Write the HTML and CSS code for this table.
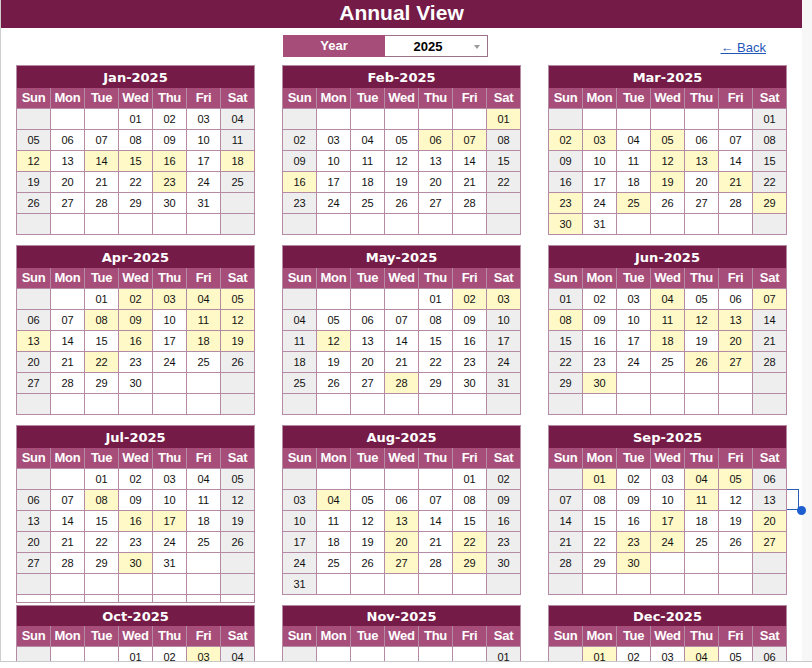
FILE: index.html
```html
<!DOCTYPE html>
<html lang="en">
<head>
<meta charset="utf-8">
<title>Annual View</title>
<link rel="stylesheet" href="styles.css">
</head>
<body>
<div class="window">
  <div class="sheet">
    <div class="titlebar">Annual View</div>
    <div class="board">
      <div class="spacer"></div>
      <div class="yearbox">
        <div class="yearlabel">Year</div>
        <div class="yearselect"><span class="yearval">2025</span><span class="caret"></span></div>
      </div>
      <div class="backcell"><a class="back" href="#">&larr; Back</a></div>

      <div class="month">
        <div class="mtitle">Jan-2025</div>
        <div class="grid">
          <div class="dn">Sun</div><div class="dn">Mon</div><div class="dn">Tue</div><div class="dn">Wed</div><div class="dn">Thu</div><div class="dn">Fri</div><div class="dn">Sat</div>
          <div class="c w"></div><div class="c"></div><div class="c"></div><div class="c">01</div><div class="c">02</div><div class="c">03</div><div class="c w">04</div>
          <div class="c w">05</div><div class="c">06</div><div class="c">07</div><div class="c">08</div><div class="c">09</div><div class="c">10</div><div class="c w">11</div>
          <div class="c h">12</div><div class="c">13</div><div class="c h">14</div><div class="c h">15</div><div class="c h">16</div><div class="c">17</div><div class="c h">18</div>
          <div class="c w">19</div><div class="c">20</div><div class="c">21</div><div class="c">22</div><div class="c h">23</div><div class="c">24</div><div class="c w">25</div>
          <div class="c w">26</div><div class="c">27</div><div class="c">28</div><div class="c">29</div><div class="c">30</div><div class="c">31</div><div class="c w"></div>
          <div class="c w"></div><div class="c"></div><div class="c"></div><div class="c"></div><div class="c"></div><div class="c"></div><div class="c w"></div>
        </div>
      </div>

      <div class="month">
        <div class="mtitle">Feb-2025</div>
        <div class="grid">
          <div class="dn">Sun</div><div class="dn">Mon</div><div class="dn">Tue</div><div class="dn">Wed</div><div class="dn">Thu</div><div class="dn">Fri</div><div class="dn">Sat</div>
          <div class="c w"></div><div class="c"></div><div class="c"></div><div class="c"></div><div class="c"></div><div class="c"></div><div class="c h">01</div>
          <div class="c w">02</div><div class="c">03</div><div class="c">04</div><div class="c">05</div><div class="c h">06</div><div class="c h">07</div><div class="c w">08</div>
          <div class="c w">09</div><div class="c">10</div><div class="c">11</div><div class="c">12</div><div class="c">13</div><div class="c">14</div><div class="c w">15</div>
          <div class="c h">16</div><div class="c">17</div><div class="c">18</div><div class="c">19</div><div class="c">20</div><div class="c">21</div><div class="c w">22</div>
          <div class="c w">23</div><div class="c">24</div><div class="c">25</div><div class="c">26</div><div class="c">27</div><div class="c">28</div><div class="c w"></div>
          <div class="c w"></div><div class="c"></div><div class="c"></div><div class="c"></div><div class="c"></div><div class="c"></div><div class="c w"></div>
        </div>
      </div>

      <div class="month">
        <div class="mtitle">Mar-2025</div>
        <div class="grid">
          <div class="dn">Sun</div><div class="dn">Mon</div><div class="dn">Tue</div><div class="dn">Wed</div><div class="dn">Thu</div><div class="dn">Fri</div><div class="dn">Sat</div>
          <div class="c w"></div><div class="c"></div><div class="c"></div><div class="c"></div><div class="c"></div><div class="c"></div><div class="c w">01</div>
          <div class="c h">02</div><div class="c h">03</div><div class="c">04</div><div class="c h">05</div><div class="c">06</div><div class="c">07</div><div class="c w">08</div>
          <div class="c w">09</div><div class="c">10</div><div class="c">11</div><div class="c h">12</div><div class="c h">13</div><div class="c">14</div><div class="c w">15</div>
          <div class="c w">16</div><div class="c">17</div><div class="c">18</div><div class="c h">19</div><div class="c">20</div><div class="c h">21</div><div class="c w">22</div>
          <div class="c h">23</div><div class="c">24</div><div class="c h">25</div><div class="c">26</div><div class="c">27</div><div class="c">28</div><div class="c h">29</div>
          <div class="c h">30</div><div class="c">31</div><div class="c"></div><div class="c"></div><div class="c"></div><div class="c"></div><div class="c w"></div>
        </div>
      </div>

      <div class="month">
        <div class="mtitle">Apr-2025</div>
        <div class="grid">
          <div class="dn">Sun</div><div class="dn">Mon</div><div class="dn">Tue</div><div class="dn">Wed</div><div class="dn">Thu</div><div class="dn">Fri</div><div class="dn">Sat</div>
          <div class="c w"></div><div class="c"></div><div class="c">01</div><div class="c h">02</div><div class="c h">03</div><div class="c h">04</div><div class="c h">05</div>
          <div class="c w">06</div><div class="c">07</div><div class="c h">08</div><div class="c h">09</div><div class="c">10</div><div class="c h">11</div><div class="c h">12</div>
          <div class="c h">13</div><div class="c">14</div><div class="c">15</div><div class="c h">16</div><div class="c">17</div><div class="c h">18</div><div class="c h">19</div>
          <div class="c w">20</div><div class="c">21</div><div class="c h">22</div><div class="c">23</div><div class="c">24</div><div class="c">25</div><div class="c w">26</div>
          <div class="c w">27</div><div class="c">28</div><div class="c">29</div><div class="c">30</div><div class="c"></div><div class="c"></div><div class="c w"></div>
          <div class="c w"></div><div class="c"></div><div class="c"></div><div class="c"></div><div class="c"></div><div class="c"></div><div class="c w"></div>
        </div>
      </div>

      <div class="month">
        <div class="mtitle">May-2025</div>
        <div class="grid">
          <div class="dn">Sun</div><div class="dn">Mon</div><div class="dn">Tue</div><div class="dn">Wed</div><div class="dn">Thu</div><div class="dn">Fri</div><div class="dn">Sat</div>
          <div class="c w"></div><div class="c"></div><div class="c"></div><div class="c"></div><div class="c">01</div><div class="c h">02</div><div class="c h">03</div>
          <div class="c w">04</div><div class="c">05</div><div class="c">06</div><div class="c">07</div><div class="c">08</div><div class="c">09</div><div class="c w">10</div>
          <div class="c w">11</div><div class="c h">12</div><div class="c">13</div><div class="c">14</div><div class="c">15</div><div class="c">16</div><div class="c w">17</div>
          <div class="c w">18</div><div class="c">19</div><div class="c">20</div><div class="c">21</div><div class="c">22</div><div class="c">23</div><div class="c w">24</div>
          <div class="c w">25</div><div class="c">26</div><div class="c">27</div><div class="c h">28</div><div class="c">29</div><div class="c">30</div><div class="c w">31</div>
          <div class="c w"></div><div class="c"></div><div class="c"></div><div class="c"></div><div class="c"></div><div class="c"></div><div class="c w"></div>
        </div>
      </div>

      <div class="month">
        <div class="mtitle">Jun-2025</div>
        <div class="grid">
          <div class="dn">Sun</div><div class="dn">Mon</div><div class="dn">Tue</div><div class="dn">Wed</div><div class="dn">Thu</div><div class="dn">Fri</div><div class="dn">Sat</div>
          <div class="c w">01</div><div class="c">02</div><div class="c">03</div><div class="c h">04</div><div class="c">05</div><div class="c">06</div><div class="c h">07</div>
          <div class="c h">08</div><div class="c">09</div><div class="c">10</div><div class="c h">11</div><div class="c h">12</div><div class="c h">13</div><div class="c w">14</div>
          <div class="c w">15</div><div class="c">16</div><div class="c">17</div><div class="c h">18</div><div class="c">19</div><div class="c h">20</div><div class="c w">21</div>
          <div class="c w">22</div><div class="c">23</div><div class="c">24</div><div class="c">25</div><div class="c h">26</div><div class="c h">27</div><div class="c w">28</div>
          <div class="c w">29</div><div class="c h">30</div><div class="c"></div><div class="c"></div><div class="c"></div><div class="c"></div><div class="c w"></div>
          <div class="c w"></div><div class="c"></div><div class="c"></div><div class="c"></div><div class="c"></div><div class="c"></div><div class="c w"></div>
        </div>
      </div>

      <div class="month tail">
        <div class="mtitle">Jul-2025</div>
        <div class="grid">
          <div class="dn">Sun</div><div class="dn">Mon</div><div class="dn">Tue</div><div class="dn">Wed</div><div class="dn">Thu</div><div class="dn">Fri</div><div class="dn">Sat</div>
          <div class="c w"></div><div class="c"></div><div class="c">01</div><div class="c">02</div><div class="c">03</div><div class="c">04</div><div class="c w">05</div>
          <div class="c w">06</div><div class="c">07</div><div class="c h">08</div><div class="c">09</div><div class="c">10</div><div class="c">11</div><div class="c w">12</div>
          <div class="c w">13</div><div class="c">14</div><div class="c">15</div><div class="c h">16</div><div class="c h">17</div><div class="c">18</div><div class="c w">19</div>
          <div class="c w">20</div><div class="c">21</div><div class="c">22</div><div class="c">23</div><div class="c">24</div><div class="c">25</div><div class="c w">26</div>
          <div class="c w">27</div><div class="c">28</div><div class="c">29</div><div class="c h">30</div><div class="c">31</div><div class="c"></div><div class="c w"></div>
          <div class="c w"></div><div class="c"></div><div class="c"></div><div class="c"></div><div class="c"></div><div class="c"></div><div class="c w"></div>
          <div class="c"></div><div class="c"></div><div class="c"></div><div class="c"></div><div class="c"></div><div class="c"></div><div class="c"></div>
        </div>
      </div>

      <div class="month">
        <div class="mtitle">Aug-2025</div>
        <div class="grid">
          <div class="dn">Sun</div><div class="dn">Mon</div><div class="dn">Tue</div><div class="dn">Wed</div><div class="dn">Thu</div><div class="dn">Fri</div><div class="dn">Sat</div>
          <div class="c w"></div><div class="c"></div><div class="c"></div><div class="c"></div><div class="c"></div><div class="c">01</div><div class="c w">02</div>
          <div class="c w">03</div><div class="c h">04</div><div class="c">05</div><div class="c">06</div><div class="c">07</div><div class="c">08</div><div class="c w">09</div>
          <div class="c w">10</div><div class="c">11</div><div class="c">12</div><div class="c h">13</div><div class="c">14</div><div class="c">15</div><div class="c w">16</div>
          <div class="c w">17</div><div class="c">18</div><div class="c">19</div><div class="c h">20</div><div class="c">21</div><div class="c h">22</div><div class="c w">23</div>
          <div class="c w">24</div><div class="c">25</div><div class="c">26</div><div class="c h">27</div><div class="c">28</div><div class="c h">29</div><div class="c w">30</div>
          <div class="c w">31</div><div class="c"></div><div class="c"></div><div class="c"></div><div class="c"></div><div class="c"></div><div class="c w"></div>
        </div>
      </div>

      <div class="month">
        <div class="mtitle">Sep-2025</div>
        <div class="grid">
          <div class="dn">Sun</div><div class="dn">Mon</div><div class="dn">Tue</div><div class="dn">Wed</div><div class="dn">Thu</div><div class="dn">Fri</div><div class="dn">Sat</div>
          <div class="c w"></div><div class="c h">01</div><div class="c">02</div><div class="c">03</div><div class="c h">04</div><div class="c h">05</div><div class="c w">06</div>
          <div class="c w">07</div><div class="c">08</div><div class="c">09</div><div class="c">10</div><div class="c h">11</div><div class="c">12</div><div class="c w">13</div>
          <div class="c w">14</div><div class="c">15</div><div class="c">16</div><div class="c h">17</div><div class="c">18</div><div class="c">19</div><div class="c h">20</div>
          <div class="c w">21</div><div class="c">22</div><div class="c h">23</div><div class="c h">24</div><div class="c">25</div><div class="c">26</div><div class="c h">27</div>
          <div class="c w">28</div><div class="c">29</div><div class="c h">30</div><div class="c"></div><div class="c"></div><div class="c"></div><div class="c w"></div>
          <div class="c w"></div><div class="c"></div><div class="c"></div><div class="c"></div><div class="c"></div><div class="c"></div><div class="c w"></div>
        </div>
      </div>

      <div class="month low">
        <div class="mtitle">Oct-2025</div>
        <div class="grid">
          <div class="dn">Sun</div><div class="dn">Mon</div><div class="dn">Tue</div><div class="dn">Wed</div><div class="dn">Thu</div><div class="dn">Fri</div><div class="dn">Sat</div>
          <div class="c w"></div><div class="c"></div><div class="c"></div><div class="c">01</div><div class="c">02</div><div class="c h">03</div><div class="c w">04</div>
        </div>
      </div>

      <div class="month low">
        <div class="mtitle">Nov-2025</div>
        <div class="grid">
          <div class="dn">Sun</div><div class="dn">Mon</div><div class="dn">Tue</div><div class="dn">Wed</div><div class="dn">Thu</div><div class="dn">Fri</div><div class="dn">Sat</div>
          <div class="c w"></div><div class="c"></div><div class="c"></div><div class="c"></div><div class="c"></div><div class="c"></div><div class="c w">01</div>
        </div>
      </div>

      <div class="month low">
        <div class="mtitle">Dec-2025</div>
        <div class="grid">
          <div class="dn">Sun</div><div class="dn">Mon</div><div class="dn">Tue</div><div class="dn">Wed</div><div class="dn">Thu</div><div class="dn">Fri</div><div class="dn">Sat</div>
          <div class="c w"></div><div class="c h">01</div><div class="c">02</div><div class="c">03</div><div class="c h">04</div><div class="c">05</div><div class="c w">06</div>
        </div>
      </div>
    </div>
    <div class="selection"></div>
    <div class="handle"></div>
  </div>
  <div class="gutter"></div>
</div>
</body>
</html>
```

FILE: styles.css
```css
html, body {
  margin: 0;
  padding: 0;
  background: #ffffff;
}

body {
  font-family: "Liberation Sans", Arial, sans-serif;
  color: #1a1a1a;
}

.window {
  display: flex;
  height: 661px;
  overflow: hidden;
  border-bottom: 1px solid #c8c8c8;
}

.sheet {
  position: relative;
  width: 801px;
  flex: none;
  border-left: 1px solid #cfcfcf;
  background: #ffffff;
}

.gutter {
  flex: 1;
  background: #f7f7f7;
}

.titlebar {
  height: 28px;
  background: #741b47;
  color: #ffffff;
  text-align: center;
  font-weight: bold;
  font-size: 21px;
  line-height: 25px;
}

.board {
  display: grid;
  grid-template-columns: 239px 239px 239px;
  column-gap: 27px;
  padding: 7px 0 0 15px;
  align-items: start;
}

.yearbox {
  display: flex;
  height: 22px;
  margin-bottom: 8px;
  margin-left: 1px;
}

.yearlabel {
  width: 102px;
  background: #a64d79;
  color: #ffffff;
  font-weight: bold;
  font-size: 13px;
  line-height: 22px;
  text-align: center;
}

.yearselect {
  position: relative;
  width: 103px;
  border: 1px solid #9b7189;
  border-left: none;
  display: flex;
  align-items: center;
  justify-content: center;
  padding-right: 16px;
  box-sizing: border-box;
}

.yearval {
  font-weight: bold;
  font-size: 13px;
  color: #000000;
}

.caret {
  position: absolute;
  right: 7px;
  top: 9px;
  width: 0;
  height: 0;
  border-left: 3px solid transparent;
  border-right: 3px solid transparent;
  border-top: 4px solid #9a9a9a;
}

.backcell {
  display: flex;
  justify-content: flex-end;
  padding-right: 21px;
  padding-top: 6px;
}

.back {
  color: #1f57b8;
  font-size: 13px;
  line-height: 14px;
  text-decoration: underline;
}

.month {
  border: 1px solid #b48aa4;
  margin-bottom: 10px;
  background: #ffffff;
}

.month.tail {
  margin-bottom: 0;
}

.mtitle {
  height: 22px;
  background: #741b47;
  color: #ffffff;
  text-align: center;
  font-family: "DejaVu Sans", "Liberation Sans", sans-serif;
  font-weight: bold;
  font-size: 13px;
  line-height: 23px;
}

.low .mtitle {
  height: 20px;
  line-height: 21px;
}

.grid {
  display: grid;
  grid-template-columns: repeat(7, 33px);
  grid-auto-rows: 20px;
  gap: 1px;
  background: #b48aa4;
}

.tail .grid {
  grid-template-rows: repeat(7, 20px) 7px;
}

.dn {
  background: #a64d79;
  color: #ffffff;
  font-weight: bold;
  font-size: 13px;
  letter-spacing: -0.3px;
  line-height: 20px;
  text-align: center;
}

.c {
  background: #ffffff;
  font-size: 11px;
  line-height: 20px;
  text-align: center;
  color: #111111;
}

.c.w {
  background: #eeeeee;
}

.c.h {
  background: #fff9c8;
}

.selection {
  position: absolute;
  left: 786px;
  top: 489px;
  width: 11px;
  height: 19px;
  border: 1px solid #2d5eb5;
  border-left: none;
}

.handle {
  position: absolute;
  left: 796px;
  top: 506px;
  width: 9px;
  height: 9px;
  border-radius: 50%;
  background: #1d5fd1;
}
```
